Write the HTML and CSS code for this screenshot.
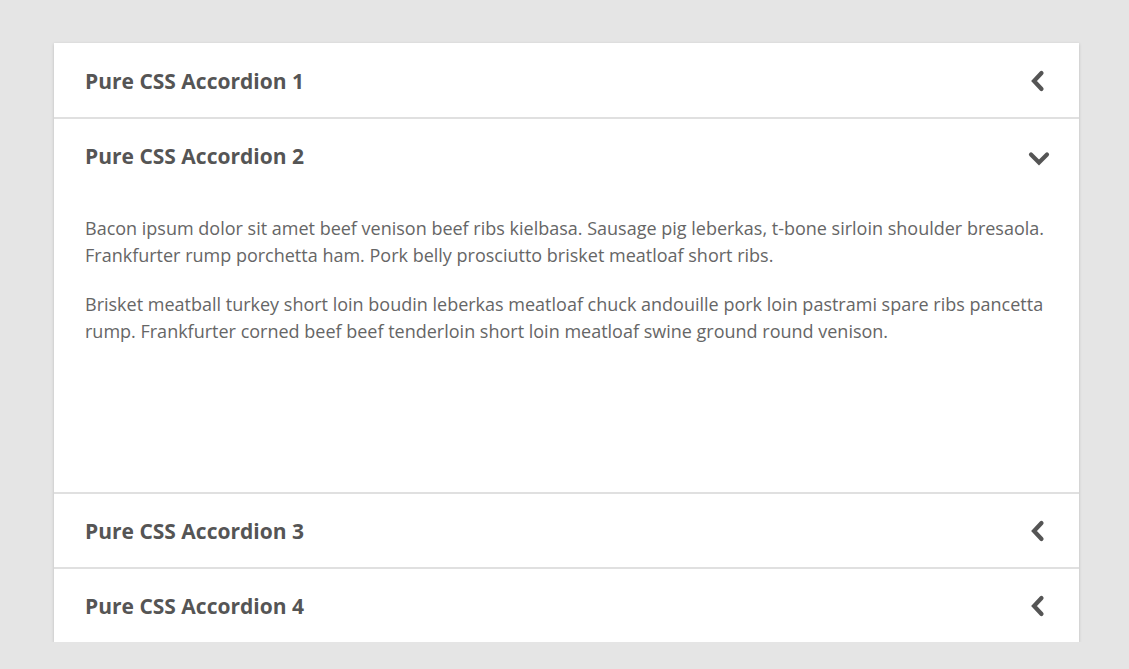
FILE: index.html
```html
<!DOCTYPE html>
<html>
<head>
<meta charset="utf-8">
<link rel="stylesheet" href="styles.css">
</head>
<body>
<div class="accordion">
  <div class="item">
    <div class="head"><span class="title">Pure CSS Accordion 1</span>
      <svg class="icon" width="20" height="22" viewBox="0 0 20 22"><polyline points="13.5,3 6,11 13.5,19" fill="none" stroke="#555" stroke-width="4.2" stroke-linejoin="miter" stroke-linecap="round"/></svg>
    </div>
  </div>
  <div class="item open">
    <div class="head"><span class="title">Pure CSS Accordion 2</span>
      <svg class="icon down" width="22" height="20" viewBox="0 0 22 20"><polyline points="3,6.5 11,14.5 19,6.5" fill="none" stroke="#555" stroke-width="4.2" stroke-linejoin="miter" stroke-linecap="round"/></svg>
    </div>
    <div class="body">
      <p>Bacon ipsum dolor sit amet beef venison beef ribs kielbasa. Sausage pig leberkas, t-bone sirloin shoulder bresaola. Frankfurter rump porchetta ham. Pork belly prosciutto brisket meatloaf short ribs.</p>
      <p>Brisket meatball turkey short loin boudin leberkas meatloaf chuck andouille pork loin pastrami spare ribs pancetta rump. Frankfurter corned beef beef tenderloin short loin meatloaf swine ground round venison.</p>
    </div>
  </div>
  <div class="item">
    <div class="head"><span class="title">Pure CSS Accordion 3</span>
      <svg class="icon" width="20" height="22" viewBox="0 0 20 22"><polyline points="13.5,3 6,11 13.5,19" fill="none" stroke="#555" stroke-width="4.2" stroke-linejoin="miter" stroke-linecap="round"/></svg>
    </div>
  </div>
  <div class="item last">
    <div class="head"><span class="title">Pure CSS Accordion 4</span>
      <svg class="icon" width="20" height="22" viewBox="0 0 20 22"><polyline points="13.5,3 6,11 13.5,19" fill="none" stroke="#555" stroke-width="4.2" stroke-linejoin="miter" stroke-linecap="round"/></svg>
    </div>
  </div>
</div>
</body>
</html>
```
FILE: styles.css
```css
html, body {
  margin: 0;
  padding: 0;
  background: #e5e5e5;
  font-family: "Open Sans", "Liberation Sans", sans-serif;
}
body {
  padding-top: 43px;
}
.accordion {
  width: 1025px;
  margin-left: 54px;
  background: #fff;
  box-shadow: 0 1px 3px rgba(0,0,0,0.18);
}
.item {
  border-bottom: 2px solid #e0e0e0;
}
.item.last {
  border-bottom: none;
}
.head {
  height: 73px;
  display: flex;
  align-items: center;
  justify-content: space-between;
  padding: 1px 31px 0 31px;
  box-sizing: border-box;
}
.item:first-child .head {
  height: 74px;
  padding-top: 2px;
}
.title {
  font-size: 21px;
  font-weight: 700;
  color: #555;
}
.icon {
  display: block;
}
.icon.down {
  margin-right: -2px;
  margin-top: 4px;
}
.body {
  height: 300px;
  box-sizing: border-box;
  padding: 23px 30px 0 31px;
}
.body p {
  margin: 0 0 22px;
  font-size: 18px;
  line-height: 27px;
  color: #666;
}
```
